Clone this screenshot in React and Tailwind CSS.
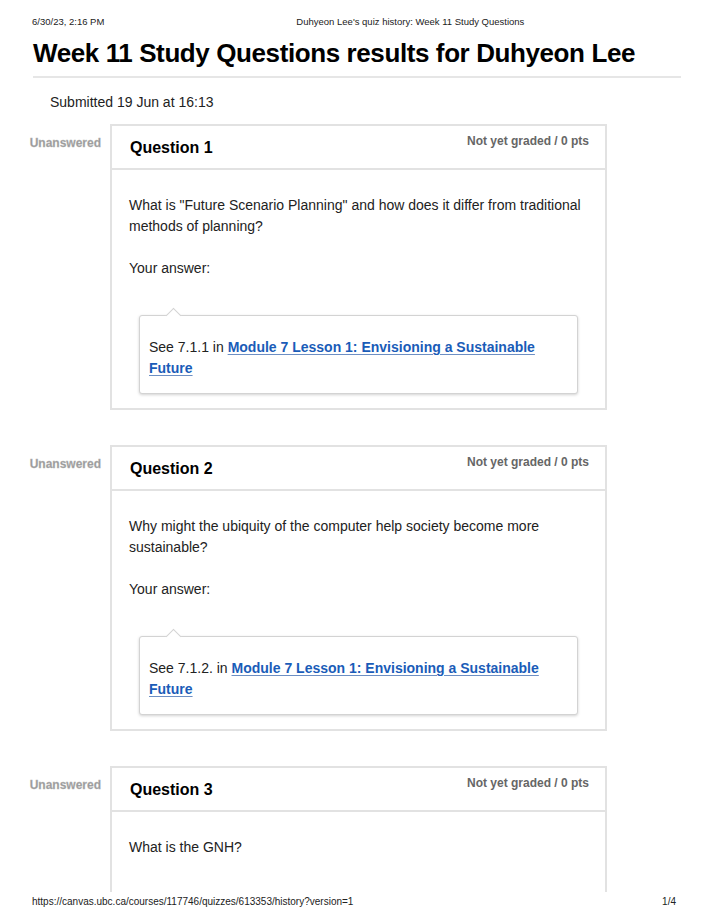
const questions = [
  {
    title: "Question 1",
    text: 'What is "Future Scenario Planning" and how does it differ from traditional methods of planning?',
    see: "See 7.1.1 in",
    link: "Module 7 Lesson 1: Envisioning a Sustainable Future",
  },
  {
    title: "Question 2",
    text: "Why might the ubiquity of the computer help society become more sustainable?",
    see: "See 7.1.2. in",
    link: "Module 7 Lesson 1: Envisioning a Sustainable Future",
  },
  {
    title: "Question 3",
    text: "What is the GNH?",
  },
]

function Question({ q }) {
  return (
    <div className="flex shrink-0">
      <div className="w-[110px] shrink-0 pr-[9px] pt-[10px] text-right text-[12px] font-bold text-[#9a9a9a] [-webkit-text-stroke:0.3px_#b5b5b5]">
        Unanswered
      </div>
      <div className="w-[497px] border-2 border-[#e2e2e2] bg-white">
        <div className="flex h-[44px] justify-between border-b-2 border-[#e2e2e2] pl-[18px] pr-[16px]">
          <h2 className="pt-[12px] text-[16px] font-bold leading-[20px] text-black">{q.title}</h2>
          <div className="pt-[8px] text-[12px] font-bold leading-[14px] text-[#666]">Not yet graded / 0 pts</div>
        </div>
        <div className={`px-[17px] pt-[25px] pb-[14px] text-[14px] leading-[21px] text-[#222] ${q.link ? "" : "min-h-[240px]"}`}>
          <p className="pr-[4px]">{q.text}</p>
          {q.link && (
            <>
              <p className="mt-[21px]">Your answer:</p>
              <div className="relative mt-[36px] ml-[10px] mr-[10px] rounded-[3px] border border-[#d3d3d3] bg-white px-[9px] pt-[21px] pb-[14px] shadow-[0_1px_3px_rgba(0,0,0,0.18)]">
                <span className="absolute -top-[6px] left-[28px] h-[11px] w-[11px] rotate-45 border-t border-l border-[#d3d3d3] bg-white" />
                <p className="relative">
                  {q.see}{" "}
                  <a href="#" className="font-bold text-[#1a5cb8] underline decoration-[#6d8fc4] underline-offset-2">
                    {q.link}
                  </a>
                </p>
              </div>
            </>
          )}
        </div>
      </div>
    </div>
  )
}

export default function App() {
  return (
    <div className="flex h-[918px] w-[714px] flex-col overflow-hidden bg-white font-['Liberation_Sans',Arial,sans-serif] text-black">
      <div className="flex px-[32px] pt-[16px] text-[9.5px] leading-[12px] text-[#222]">
        <span>6/30/23, 2:16 PM</span>
        <span className="ml-[192px]">Duhyeon Lee's quiz history: Week 11 Study Questions</span>
      </div>
      <h1 className="ml-[33px] mt-[10px] text-[26px] font-bold leading-[30px] tracking-[-0.4px]">
        Week 11 Study Questions results for Duhyeon Lee
      </h1>
      <div className="mx-[33px] mt-[8px] border-t-2 border-[#e6e6e6]" />
      <p className="ml-[50px] mt-[15px] text-[14px] leading-[18px] text-[#222]">Submitted 19 Jun at 16:13</p>
      <div className="mt-[13px] flex min-h-0 flex-1 flex-col gap-[35px] overflow-hidden">
        {questions.map((q) => (
          <Question key={q.title} q={q} />
        ))}
      </div>
      <div className="flex justify-between px-[32px] pb-[10px] pt-[4px] text-[10px] leading-[12px] text-[#222]">
        <span>https://canvas.ubc.ca/courses/117746/quizzes/613353/history?version=1</span>
        <span className="pr-[6px]">1/4</span>
      </div>
    </div>
  )
}
